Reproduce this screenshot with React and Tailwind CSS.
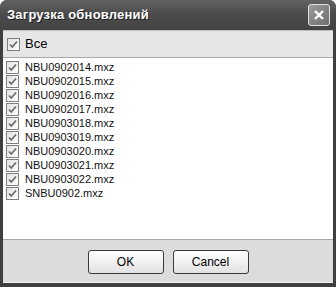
const files = [
  "NBU0902014.mxz",
  "NBU0902015.mxz",
  "NBU0902016.mxz",
  "NBU0902017.mxz",
  "NBU0903018.mxz",
  "NBU0903019.mxz",
  "NBU0903020.mxz",
  "NBU0903021.mxz",
  "NBU0903022.mxz",
  "SNBU0902.mxz",
];

const Check = () => (
  <span className="w-[13px] h-[13px] border border-[#808080] bg-gradient-to-br from-[#e2e2e2] to-white flex items-center justify-center shrink-0">
    <svg width="9" height="9" viewBox="0 0 9 9">
      <path d="M1 4.5 L3.3 7 L8 1.5" fill="none" stroke="#6e6e6e" strokeWidth="1.8" />
    </svg>
  </span>
);

export default function App() {
  return (
    <div
      className="w-[336px] h-[287px] bg-[#3f3f3f] rounded-t-[7px] flex flex-col overflow-hidden"
      style={{ fontFamily: "'Liberation Sans', Arial, sans-serif" }}
    >
      <div className="h-[30px] shrink-0 flex items-center justify-between pl-[7px] pr-[6px] bg-gradient-to-b from-[#626262] via-[#4a4a4a] to-[#444]">
        <span className="text-white font-bold text-[13px] tracking-[0.2px] [text-shadow:1px_1px_0_#222]">
          Загрузка обновлений
        </span>
        <div className="w-[22px] h-[22px] rounded-[3px] border border-[#e0e0e0] bg-gradient-to-br from-[#9a9a9a] to-[#707070] flex items-center justify-center">
          <svg width="12" height="12" viewBox="0 0 12 12">
            <path d="M2 2 L10 10 M10 2 L2 10" stroke="white" strokeWidth="2.4" />
          </svg>
        </div>
      </div>
      <div className="flex-1 mx-[3px] mb-[4px] flex flex-col bg-[#dedede] border-t border-[#bdbdbd]">
        <div className="h-[27px] shrink-0 flex items-center gap-[5px] pl-[4px] bg-[#e6e6e6] border-b border-[#a8a8a8]">
          <Check />
          <span className="text-[13px] text-black">Все</span>
        </div>
        <div className="h-[182px] shrink-0 bg-white pt-[2px] border-b border-[#a8a8a8]">
          {files.map((f) => (
            <div key={f} className="h-[14px] flex items-center gap-[6px] pl-[3px]">
              <Check />
              <span className="text-[11px] text-[#111] leading-none">{f}</span>
            </div>
          ))}
        </div>
        <div className="flex-1 flex justify-center gap-[9px] pt-[10px] bg-[#dcdcdc] border-b border-[#f2f2f2]">
          <button className="w-[76px] h-[24px] rounded-[3px] border border-[#3a3a3a] bg-gradient-to-b from-white to-[#e2e2e2] text-[12px] text-black">
            OK
          </button>
          <button className="w-[76px] h-[24px] rounded-[3px] border border-[#3a3a3a] bg-gradient-to-b from-white to-[#e2e2e2] text-[12px] text-black">
            Cancel
          </button>
        </div>
      </div>
    </div>
  );
}
